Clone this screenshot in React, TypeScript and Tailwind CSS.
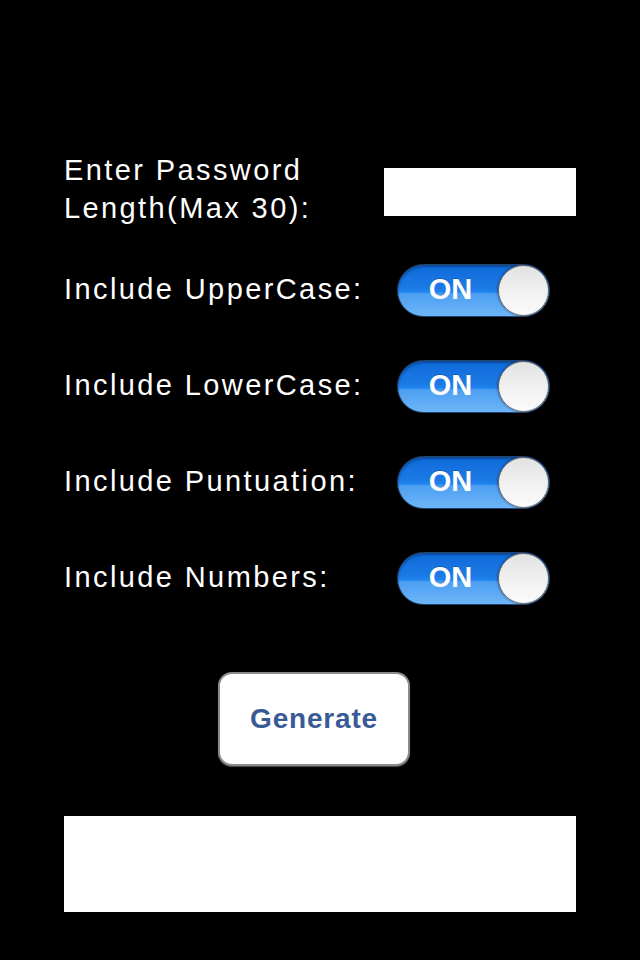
const options = [
  "Include UpperCase:",
  "Include LowerCase:",
  "Include Puntuation:",
  "Include Numbers:",
];

function Switch() {
  return (
    <div className="relative h-[53px] w-[153px] overflow-hidden rounded-full border border-[#24446e] bg-[linear-gradient(to_bottom,#0f69d8_0%,#1c7ce8_48%,#2787ee_54%,#4c9ff2_56%,#6db5f7_100%)] shadow-[inset_0_2px_2px_rgba(0,0,0,0.3)]">
      <div className="flex h-full w-[101px] items-center justify-center pb-[1px] pl-[4px] text-[29px] font-bold text-white [text-shadow:0_-1px_0_rgba(0,0,0,0.2)]">
        ON
      </div>
      <div className="absolute right-0 top-0 h-[51px] w-[51px] rounded-full border border-[#6e6e6e] bg-[linear-gradient(to_bottom,#e2e2e2_0%,#efefef_45%,#fbfbfb_100%)] shadow-[-1px_0_2px_rgba(0,0,0,0.35)]" />
    </div>
  );
}

export default function App() {
  return (
    <div className="min-h-screen w-full bg-black font-['Liberation_Sans',Arial,sans-serif] text-white">
      <div className="px-16 pt-[151px] pb-12">
        {/* Length */}
        <div className="flex items-start">
          <div className="w-[320px] text-[29px] leading-[38px] tracking-[2.4px]">
            Enter Password
            <br />
            Length(Max 30):
          </div>
          <div className="mt-[17px] h-[48px] w-[192px] bg-white" />
        </div>

        {/* Toggles */}
        <div className="mt-[37px] flex flex-col gap-[43px]">
          {options.map((label) => (
            <div key={label} className="flex h-[53px] items-center">
              <div className="w-[333px] pb-[4px] text-[29px] leading-[38px] tracking-[2.4px]">{label}</div>
              <Switch />
            </div>
          ))}
        </div>

        {/* Generate */}
        <div className="mt-[67px] ml-[154px]">
          <button className="flex h-[94px] w-[192px] items-center justify-center rounded-[14px] border-2 border-[#8c8c8c] bg-white text-[28px] font-bold tracking-[0.8px] text-[#3a5a95] shadow-[0_1px_1px_rgba(255,255,255,0.3)]">
            Generate
          </button>
        </div>

        {/* Output */}
        <div className="mt-[50px] h-[96px] w-full bg-white" />
      </div>
    </div>
  );
}
